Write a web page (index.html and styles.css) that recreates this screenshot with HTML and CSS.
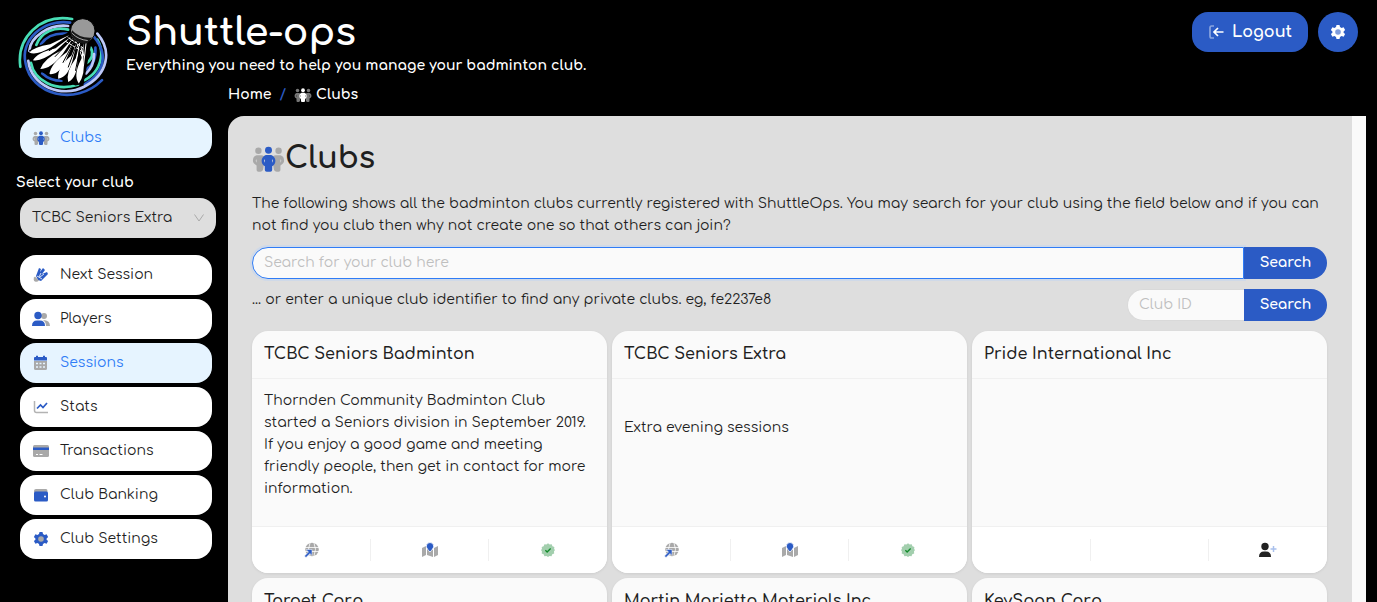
FILE: index.html
```html
<!DOCTYPE html>
<html lang="en">

<head>
    <meta charset="UTF-8" />
    <meta name="viewport" content="width=device-width, initial-scale=1.0" />
    <title>Shuttle-ops</title>
    <link rel="stylesheet" href="styles.css">
</head>

<body>
    <!-- shared icons -->
    <svg class="sprite" aria-hidden="true">
        <symbol id="people" viewBox="0 0 36 28">
            <g class="soft">
                <circle cx="7" cy="5" r="3.500" />
                <circle cx="29" cy="5" r="3.500" />
                <path fill-rule="evenodd" d="M5 10h5q2 0 3 1-3 5 0 9l-1 6q-1 2-3 2H7q-2 0-2-2v-5q-4-2-4-5 0-5 4-6zM31 10h-5q-2 0-3 1 3 5 0 9l1 6q1 2 3 2h2q2 0 2-2v-5q4-2 4-5 0-5-4-6zM5 14q-2 2 0 4zm26 0v4q2-2 0-4z" />
            </g>
            <circle class="main" cx="18" cy="4.500" r="3.800" />
            <path class="main" fill-rule="evenodd" d="M15 9.500h6q4.500 2 4.500 6.500 0 4-3.500 6v4q0 2-2 2h-4q-2 0-2-2v-4q-3.500-2-3.500-6 0-4.500 4.500-6.500zm-1 4.500q-2 2 0 4zm8 0v4q2-2 0-4z" />
        </symbol>
        <symbol id="cog" viewBox="0 0 16 16">
            <path class="main" d="M6.500 1h3l.5 2 1.600.9 2-.6 1.500 2.600L13.600 7.400v1.300l1.500 1.400-1.500 2.600-2-.6-1.600.9-.5 2h-3l-.5-2-1.600-.9-2 .6L.9 10.100l1.500-1.400V7.400L.9 5.900l1.500-2.600 2 .6L6 3z" />
            <circle class="soft" cx="8" cy="8" r="2.800" />
        </symbol>
        <symbol id="globe" viewBox="0 0 16 16">
            <circle class="soft" cx="9" cy="7.500" r="6.800" />
            <path d="M2 5.500h14M2 9.500h14M7 1q-3 6 0 13M11 1q3 6 0 13" fill="none" stroke="#fff" stroke-width=".8" />
            <path d="M3 7.500h6v6l-2-2-4 4L1.500 14l4-4z" class="main" stroke="#fff" stroke-width=".5" />
        </symbol>
        <symbol id="map" viewBox="0 0 18 16">
            <path class="soft" d="M1 6l4-2v9l-4 2zM6 5l6 3v7l-6-2zM13 6l4-2v9l-4 2z" />
            <path class="main" stroke="#fff" stroke-width=".8" d="M9 .5a3.700 3.700 0 0 1 3.700 3.700C12.700 6 10.500 8.500 9 10 7.500 8.500 5.300 6 5.300 4.200A3.700 3.700 0 0 1 9 .5z" />
        </symbol>
        <symbol id="badge" viewBox="0 0 16 16">
            <path fill="#a3cfae" d="M8 .3l1.900 1.400 2.300-.3.900 2.200 2.200.9-.3 2.300L16 8l-1.200 1.700.3 2.300-2.200.9-.9 2.200-2.300-.3L8 16l-1.800-1.200-2.300.3-.9-2.200-2.200-.9.300-2.300L0 8l1.100-1.200-.3-2.300 2.200-.9.900-2.200 2.300.3z" />
            <path d="M5 8.300l2 2 4-4" fill="none" stroke="#128a2a" stroke-width="1.500" />
        </symbol>
        <symbol id="join" viewBox="0 0 20 16">
            <g fill="#222">
                <circle cx="7" cy="4.500" r="3.700" />
                <path d="M1 15q0-5.500 5-5.500h2q5 0 5 5.500z" />
            </g>
            <path d="M15.500 4v6M12.500 7h6" stroke="#a9c0ec" stroke-width="1.500" />
        </symbol>
    </svg>

    <header class="header">
        <svg class="logo" viewBox="50 42 280 256" role="img" aria-label="Shuttle-ops logo">
            <g fill="none" stroke-width="8" stroke-linecap="round">
                <g stroke="#48ddb5">
                    <path d="M60 198C48 110 120 38 216 54" />
                    <path d="M108 132C124 92 164 76 204 86" />
                    <path d="M92 186C102 240 166 274 234 252" />
                    <path d="M254 238Q300 214 304 160Q304 136 292 116" />
                    <path d="M272 140Q286 168 258 188" />
                </g>
                <g stroke="#2b5bc5">
                    <path d="M210 65C130 52 58 118 76 188C92 280 224 320 306 238" />
                    <path d="M282 108C334 172 300 226 254 250" />
                    <path d="M126 218Q150 240 184 240" />
                    <path d="M122 130Q146 94 200 98" />
                    <path d="M286 140Q290 186 258 206" />
                </g>
                <g stroke="#bdc9fa">
                    <path d="M204 75C146 68 90 108 87 150" />
                    <path d="M84 180C92 256 184 294 252 258C326 220 336 148 292 98" />
                    <path d="M282 160Q282 196 258 218" />
                </g>
            </g>
            <path d="M86 148L206 94 274 126 250 250 226 254 120 212z" fill="#000" />
            <g fill="#fff">
                <path d="M208 102L150 130Q100 138 87 155q20 10 65-15z" />
                <path d="M214 106L166 142Q110 156 98 178q24 6 70-28z" />
                <path d="M220 110L184 148Q130 174 120 205q32 0 68-46z" />
                <path d="M226 113L200 154Q150 190 148 220q34 4 56-58z" />
                <path d="M233 116L214 164Q170 200 174 234q32-4 46-66z" />
                <path d="M240 120L227 172Q196 214 204 244q28-14 28-68z" />
                <path d="M250 124L244 174Q218 224 236 248q20-26 14-74z" />
            </g>
            <g stroke="#fff" stroke-width="3" fill="none">
                <path d="M202 108l48 34M194 120l56 34M232 112l20 54M222 108l24 60M258 126l-8 70" />
            </g>
            <path d="M206 110l-60 40M214 116l-50 52M224 118l-36 68M232 124l-28 76M242 130l-16 80" stroke="#000" stroke-width="3" />
            <circle cx="248" cy="90" r="37" fill="#999" stroke="#000" stroke-width="3" />
            <path d="M216 88q20 24 60 22l-14 18q-34 2-50-28z" fill="#181818" />
            <path d="M216 97q18 19 47 22" stroke="#aaa" stroke-width="3" fill="none" />
        </svg>
        <div class="brand">
            <h1>Shuttle-ops</h1>
            <p>Everything you need to help you manage your badminton club.</p>
        </div>
        <div class="actions">
            <button type="button" class="btn btn-logout">
                <svg width="16" height="16" viewBox="0 0 16 16" fill="none" stroke="#fff" stroke-width="1.700" aria-hidden="true">
                    <path d="M6 2H3.500Q2 2 2 4v8q0 2 1.500 2H6" opacity=".45" />
                    <path d="M15.500 8H6.500M10 4L6 8l4 4" />
                </svg>
                Logout
            </button>
            <button type="button" class="btn btn-round" aria-label="Settings">
                <svg width="16" height="16" aria-hidden="true"><use href="#cog" /></svg>
            </button>
        </div>
    </header>

    <nav class="breadcrumb" aria-label="Breadcrumb">
        <a href="#">Home</a>
        <span class="slash">/</span>
        <a href="#"><svg width="18" height="14" aria-hidden="true"><use href="#people" /></svg> Clubs</a>
    </nav>

    <div class="layout">
        <aside class="sidebar">
            <a href="#" class="item active">
                <svg width="18" height="14" aria-hidden="true"><use href="#people" /></svg>Clubs
            </a>
            <label for="club">Select your club</label>
            <div class="select">
                <select id="club">
                    <option>TCBC Seniors Extra</option>
                    <option>TCBC Seniors Badminton</option>
                </select>
                <svg width="12" height="12" viewBox="0 0 12 12" aria-hidden="true"><path d="M1.500 2.500L6 9l4.500-6.500" fill="none" stroke="#aaa" /></svg>
            </div>
            <nav class="menu">
                <a href="#" class="item">
                    <svg width="18" height="16" viewBox="0 0 18 16" aria-hidden="true">
                        <path class="main" d="M4 9L7 1l2 1-1 3 3-4 2 2-3 4 5-2 1 2-7 7-3-1z" />
                        <path d="M5 9l5 3M9 6l-2 4M12 7l-4 3" stroke="#fff" stroke-width=".8" />
                        <path class="soft" d="M3 9.500l4 4q-2 2-4 1t-1-4z" />
                    </svg>Next Session
                </a>
                <a href="#" class="item">
                    <svg width="18" height="16" viewBox="0 0 18 16" aria-hidden="true">
                        <circle class="soft" cx="12" cy="5" r="3" />
                        <path class="soft" d="M11 9q7 0 7 6h-4q0-4-3-6z" />
                        <circle class="main" cx="6" cy="4.500" r="3.700" />
                        <path class="main" d="M0 15q0-5.500 5-5.500h3q5 0 5 5.500z" />
                    </svg>Players
                </a>
                <a href="#" class="item active">
                    <svg width="18" height="16" viewBox="0 0 18 16" aria-hidden="true">
                        <path class="soft" d="M2 6h13v7.500q0 1.500-1.500 1.500h-10Q2 15 2 13.500z" />
                        <path class="main" d="M2 5.500V3q0-1 1-1h1V.8h2V2h5V.8h2V2h1q1 0 1 1v2.500z" />
                        <path d="M4 8.500h9M4 12h9" stroke="#e6f4ff" stroke-width="1.500" stroke-dasharray="2 1.500" />
                    </svg>Sessions
                </a>
                <a href="#" class="item">
                    <svg width="18" height="16" viewBox="0 0 18 16" fill="none" aria-hidden="true">
                        <path d="M2.500 2v9.500q0 2 2 2H16" stroke="#b3b3b3" stroke-width="1.500" />
                        <path d="M5 9.500L8.500 6l2.500 2.500 4-4.500" stroke="#2b5bc5" stroke-width="1.700" />
                    </svg>Stats
                </a>
                <a href="#" class="item">
                    <svg width="18" height="16" viewBox="0 0 18 16" aria-hidden="true">
                        <rect class="soft" x="1" y="2" width="16" height="12" rx="1.500" />
                        <path class="main" d="M1 4.500h16v2.500H1z" />
                        <path d="M4 11.500h2M7.500 11.500h3" stroke="#fff" />
                    </svg>Transactions
                </a>
                <a href="#" class="item">
                    <svg width="18" height="16" viewBox="0 0 18 16" aria-hidden="true">
                        <path class="soft" d="M2 4q0-2 2-2h10q1.500 0 1.500 2v1H2z" />
                        <rect class="main" x="2" y="4.500" width="14" height="10" rx="1.500" />
                        <circle cx="13" cy="9.500" r="1" fill="#fff" />
                    </svg>Club Banking
                </a>
                <a href="#" class="item">
                    <svg width="18" height="16" aria-hidden="true"><use href="#cog" /></svg>Club Settings
                </a>
            </nav>
        </aside>

        <main class="content">
            <h2><svg width="33" height="26" aria-hidden="true"><use href="#people" /></svg>Clubs</h2>
            <p>The following shows all the badminton clubs currently registered with ShuttleOps. You may search for your club using the field below and if you can not find you club then why not create one so that others can join?</p>
            <form class="search focused">
                <input type="text" aria-label="Search for your club" placeholder="Search for your club here">
                <button type="button">Search</button>
            </form>
            <div class="private">
                <label for="club-id">... or enter a unique club identifier to find any private clubs. eg, fe2237e8</label>
                <form class="search small">
                    <input type="text" id="club-id" placeholder="Club ID">
                    <button type="button">Search</button>
                </form>
            </div>

            <div class="cards">
                <article class="card">
                    <h3>TCBC Seniors Badminton</h3>
                    <div class="card-body">
                        <p>Thornden Community Badminton Club started a Seniors division in September 2019. If you enjoy a good game and meeting friendly people, then get in contact for more information.</p>
                    </div>
                    <ul>
                        <li><a href="#" aria-label="Website"><svg width="16" height="16"><use href="#globe" /></svg></a></li>
                        <li><a href="#" aria-label="Map"><svg width="18" height="16"><use href="#map" /></svg></a></li>
                        <li><svg width="14" height="14" role="img" aria-label="Member"><use href="#badge" /></svg></li>
                    </ul>
                </article>
                <article class="card">
                    <h3>TCBC Seniors Extra</h3>
                    <div class="card-body">
                        <p>Extra evening sessions</p>
                    </div>
                    <ul>
                        <li><a href="#" aria-label="Website"><svg width="16" height="16"><use href="#globe" /></svg></a></li>
                        <li><a href="#" aria-label="Map"><svg width="18" height="16"><use href="#map" /></svg></a></li>
                        <li><svg width="14" height="14" role="img" aria-label="Member"><use href="#badge" /></svg></li>
                    </ul>
                </article>
                <article class="card">
                    <h3>Pride International Inc</h3>
                    <div class="card-body"></div>
                    <ul>
                        <li></li>
                        <li></li>
                        <li><a href="#" aria-label="Join club"><svg width="20" height="16"><use href="#join" /></svg></a></li>
                    </ul>
                </article>
                <article class="card">
                    <h3>Target Corp.</h3>
                    <div class="card-body"></div>
                </article>
                <article class="card">
                    <h3>Martin Marietta Materials Inc.</h3>
                    <div class="card-body"></div>
                </article>
                <article class="card">
                    <h3>KeySpan Corp.</h3>
                    <div class="card-body"></div>
                </article>
            </div>
        </main>
    </div>
</body>

</html>
```
FILE: styles.css
```css
* {
    margin: 0;
    padding: 0;
    box-sizing: border-box;
}

body {
    display: flex;
    flex-direction: column;
    height: 100vh;
    overflow: hidden;
    background-color: #000;
    color: #1f1f1f;
    font: 14px/22px Comfortaa, Lato, sans-serif;
}

a {
    color: inherit;
    text-decoration: none;
}

button,
input,
select {
    font: inherit;
    border: none;
    outline: none;
}

svg {
    flex: none;
}

.sprite {
    position: absolute;
    width: 0;
    height: 0;
}

.main {
    fill: var(--main, #2b5bc5);
}

.soft {
    fill: var(--soft, #a9a9a9);
}

.header {
    display: flex;
    align-items: flex-start;
    height: 83px;
    padding: 12px 19px 0 17px;
    color: #fff;
}

.logo {
    width: 93px;
    height: 85px;
    margin-top: 3px;
}

.brand {
    flex: 1;
    margin-left: 16px;
    font-weight: 700;
}

.brand h1 {
    font-size: 38px;
    line-height: 42px;
    font-weight: 700;
}

.brand p {
    margin-top: 1px;
}

.actions {
    display: flex;
    gap: 10px;
}

.btn {
    display: flex;
    align-items: center;
    justify-content: center;
    gap: 8px;
    height: 40px;
    border-radius: 16px;
    background-color: #2b5bc5;
    color: #fff;
    --main: #fff;
    --soft: #7f9cdc;
}

.btn-logout {
    padding: 0 16px;
    font-size: 16px;
    font-weight: 700;
}

.btn-round {
    width: 40px;
    border-radius: 50%;
}

.breadcrumb {
    display: flex;
    align-items: center;
    gap: 8px;
    height: 33px;
    padding: 0 0 10px 228px;
    color: #fff;
    font-weight: 700;
    --main: #fff;
    --soft: #777;
}

.breadcrumb a {
    display: flex;
    align-items: center;
    gap: 4px;
}

.slash {
    color: #2b5bc5;
}

.layout {
    display: flex;
    flex: 1;
    min-height: 0;
    padding-right: 11px;
}

.sidebar {
    flex: none;
    width: 228px;
    padding: 2px 12px 0 20px;
}

.item {
    display: flex;
    align-items: center;
    gap: 10px;
    width: 192px;
    height: 40px;
    margin-bottom: 4px;
    padding: 0 12px;
    border-radius: 16px;
    background-color: #fff;
}

.active {
    background-color: #e6f4ff;
    color: #2f7cf6;
}

.sidebar label {
    display: block;
    margin: 14px 0 4px -4px;
    color: #fff;
    font-weight: 700;
}

.select {
    position: relative;
    margin-bottom: 17px;
}

.select select {
    display: block;
    width: 100%;
    height: 40px;
    padding: 0 12px;
    border-radius: 16px;
    background-color: #dedede;
    color: #1f1f1f;
    appearance: none;
}

.select svg {
    position: absolute;
    right: 11px;
    top: 14px;
    pointer-events: none;
}

.content {
    flex: 1;
    overflow-y: auto;
    scrollbar-width: none;
    padding: 24px 25px 24px 24px;
    border-right: 14px solid #fafafa;
    border-radius: 16px 0 0 0;
    background-color: #dedede;
}

h2 {
    display: flex;
    align-items: center;
    margin-bottom: 15px;
    font-size: 30px;
    line-height: 38px;
    font-weight: 700;
}

.search {
    display: flex;
    height: 32px;
    margin-top: 10px;
}

.search input {
    flex: 1;
    min-width: 0;
    padding: 0 11px;
    border: 1px solid #d9d9d9;
    border-right: none;
    border-radius: 16px 0 0 16px;
    background-color: #fafafa;
}

.search input::placeholder {
    color: #bfbfbf;
}

.focused input {
    border: 1px solid #2f7cf6;
    box-shadow: 0 0 0 2px #cfd9e8;
}

.search button {
    width: 83px;
    border-radius: 0 16px 16px 0;
    background-color: #2b5bc5;
    color: #fff;
    font-weight: 700;
    z-index: 1;
}

.private {
    display: flex;
    justify-content: space-between;
    margin: 10px 0;
}

.content > p + .search {
    margin-top: 10px;
}

.small {
    width: 200px;
    margin: 0;
}

.cards {
    display: grid;
    grid-template-columns: repeat(3, 1fr);
    gap: 5px;
}

.card {
    border-radius: 16px;
    background-color: #fafafa;
    box-shadow: 0 1px 3px rgba(0, 0, 0, 0.08);
    overflow: hidden;
}

.card h3 {
    height: 48px;
    padding: 0 12px;
    border-bottom: 1px solid #f0f0f0;
    font-size: 16px;
    line-height: 46px;
    font-weight: 600;
}

.card-body {
    height: 147px;
    padding: 11px 12px;
}

.card-body p {
    display: flex;
    align-items: center;
    min-height: 76px;
}

.card ul {
    display: flex;
    padding: 12px 0;
    border-top: 1px solid #f0f0f0;
    background-color: #fff;
    list-style: none;
}

.card li {
    display: flex;
    flex: 1;
    align-items: center;
    justify-content: center;
    height: 22px;
    border-right: 1px solid #f0f0f0;
}

.card li:last-child {
    border-right: none;
}

.card li a {
    display: flex;
}
```
